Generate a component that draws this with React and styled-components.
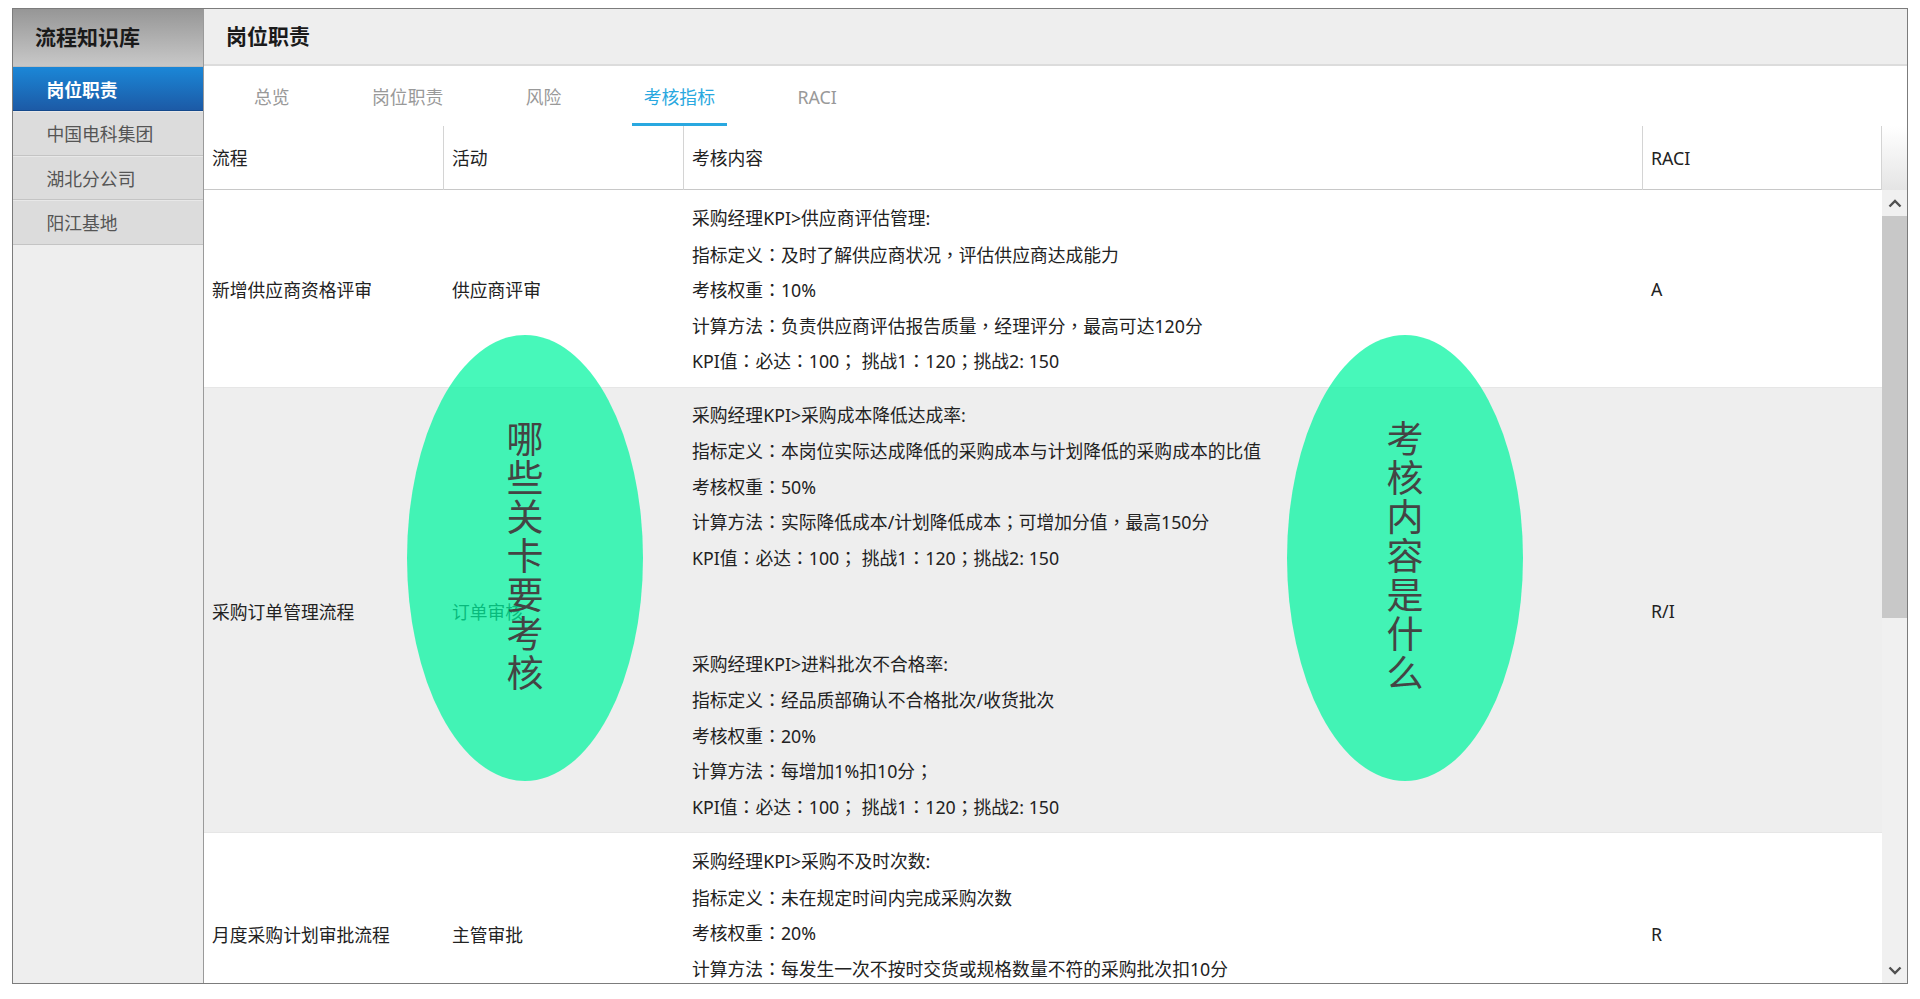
import React from 'react'
import styled, { createGlobalStyle } from 'styled-components'

const kpi = 'KPI值：必达：100； 挑战1：120；挑战2: 150'

const rows = [
  {
    flow: '新增供应商资格评审',
    step: '供应商评审',
    top: 11,
    bottom: 8,
    lines: [
      '采购经理KPI>供应商评估管理:',
      '指标定义：及时了解供应商状况，评估供应商达成能力',
      '考核权重：10%',
      '计算方法：负责供应商评估报告质量，经理评分，最高可达120分',
      kpi,
    ],
    raci: 'A',
  },
  {
    flow: '采购订单管理流程',
    step: '订单审核',
    top: 10,
    bottom: 8,
    active: true,
    lines: [
      '采购经理KPI>采购成本降低达成率:',
      '指标定义：本岗位实际达成降低的采购成本与计划降低的采购成本的比值',
      '考核权重：50%',
      '计算方法：实际降低成本/计划降低成本；可增加分值，最高150分',
      kpi,
      '',
      '',
      '采购经理KPI>进料批次不合格率:',
      '指标定义：经品质部确认不合格批次/收货批次',
      '考核权重：20%',
      '计算方法：每增加1%扣10分；',
      kpi,
    ],
    raci: 'R/I',
  },
  {
    flow: '月度采购计划审批流程',
    step: '主管审批',
    top: 11,
    bottom: 10,
    lines: [
      '采购经理KPI>采购不及时次数:',
      '指标定义：未在规定时间内完成采购次数',
      '考核权重：20%',
      '计算方法：每发生一次不按时交货或规格数量不符的采购批次扣10分',
      kpi,
    ],
    raci: 'R',
  },
]

const Global = createGlobalStyle`
  html, body { margin: 0; padding: 0; background: #fff; }
  body { font-family: "Noto Sans", "Noto Sans CJK SC", sans-serif; color: #222; }
`

// these marks sit centred in the reference, TC has them that way
const withMarks = (text) =>
  text.split(/([：；，])/).map((part, i) => (i % 2 ? <Mark key={i}>{part}</Mark> : part))

export default function App() {
  return (
    <Page>
      <Global />
      <Frame>
        <Sidebar>
          <SideTitle>流程知识库</SideTitle>
          <SideItem $active>岗位职责</SideItem>
          <SideItem>中国电科集团</SideItem>
          <SideItem>湖北分公司</SideItem>
          <SideItem>阳江基地</SideItem>
        </Sidebar>
        <Main>
          <TitleBar>岗位职责</TitleBar>
          <Tabs>
            <Tab>总览</Tab>
            <Tab>岗位职责</Tab>
            <Tab>风险</Tab>
            <Tab $active>考核指标</Tab>
            <Tab>RACI</Tab>
          </Tabs>
          <HeadRow>
            <HeadCell>流程</HeadCell>
            <HeadCell>活动</HeadCell>
            <HeadCell>考核内容</HeadCell>
            <HeadCell>RACI</HeadCell>
            <HeadCorner />
          </HeadRow>
          <Body>
            <Rows>
              {rows.map((row) => (
                <Row key={row.flow} $active={row.active}>
                  <Cell>{row.flow}</Cell>
                  <Cell>{row.step}</Cell>
                  <Lines $top={row.top} $bottom={row.bottom}>
                    {row.lines.map((line, i) => (
                      <Line key={i}>{withMarks(line)}</Line>
                    ))}
                  </Lines>
                  <Cell>{row.raci}</Cell>
                </Row>
              ))}
            </Rows>
            <Scrollbar>
              <ScrollArrow>
                <svg width="14" height="9" viewBox="0 0 14 9">
                  <path d="M1.5 7.5 7 2l5.5 5.5" fill="none" stroke="#505050" strokeWidth="2.4" />
                </svg>
              </ScrollArrow>
              <Thumb />
              <Track />
              <ScrollArrow>
                <svg width="14" height="9" viewBox="0 0 14 9">
                  <path d="M1.5 1.5 7 7l5.5-5.5" fill="none" stroke="#505050" strokeWidth="2.4" />
                </svg>
              </ScrollArrow>
            </Scrollbar>
          </Body>
        </Main>
        <Bubble $left={394}>哪些关卡要考核</Bubble>
        <Bubble $left={1274}>考核内容是什么</Bubble>
      </Frame>
    </Page>
  )
}

const Page = styled.div`
  width: 1920px;
  height: 999px;
  padding: 8px 0 0 12px;
  box-sizing: border-box;
  overflow: hidden;
`

const Frame = styled.div`
  position: relative;
  display: flex;
  width: 1896px;
  height: 976px;
  box-sizing: border-box;
  border: 1px solid #7c7c7c;
  background: #fff;
`

const Sidebar = styled.div`
  width: 190px;
  flex: none;
  background: #eee;
  border-right: 1px solid #9a9a9a;
`

const SideTitle = styled.div`
  height: 58px;
  padding-left: 22px;
  box-sizing: border-box;
  border-bottom: 1px solid #bbb;
  background: linear-gradient(#969696, #c8c8c8);
  font-size: 21px;
  font-weight: 700;
  line-height: 56px;
  color: #1a1a1a;
`

const SideItem = styled.div`
  height: ${(p) => (p.$active ? 44 : 44.5)}px;
  padding-left: 33.5px;
  box-sizing: border-box;
  font-size: 17.8px;
  line-height: 44px;
  font-weight: ${(p) => (p.$active ? 700 : 400)};
  color: ${(p) => (p.$active ? '#fff' : '#555')};
  background: ${(p) => (p.$active ? 'linear-gradient(#1b86d6, #1c5aa6)' : '#dcdcdc')};
  border-top: 1px solid ${(p) => (p.$active ? '#1b86d6' : '#e8e8e8')};
  border-bottom: 1px solid ${(p) => (p.$active ? '#14498c' : '#c4c4c4')};
`

const Main = styled.div`
  flex: 1;
  min-width: 0;
  display: flex;
  flex-direction: column;
`

const TitleBar = styled.div`
  height: 57px;
  flex: none;
  padding-left: 22px;
  box-sizing: border-box;
  background: #eee;
  border-bottom: 2px solid #dcdcdc;
  font-size: 21px;
  font-weight: 700;
  line-height: 55px;
  color: #1a1a1a;
`

const Tabs = styled.div`
  height: 60px;
  flex: none;
  display: flex;
  padding-left: 38px;
`

const Tab = styled.div`
  padding: 0 12px;
  margin-right: 58.5px;
  box-sizing: border-box;
  height: 60px;
  font-size: 17.8px;
  line-height: 62px;
  color: ${(p) => (p.$active ? '#29a8e0' : '#999')};
  border-bottom: 3px solid ${(p) => (p.$active ? '#29a8e0' : 'transparent')};
`

const columns = '240px 240px 959px 239px'

const HeadRow = styled.div`
  height: 64px;
  flex: none;
  display: grid;
  grid-template-columns: ${columns} 1fr;
  border-bottom: 1px solid #c8c8c8;
  box-sizing: border-box;
`

const HeadCell = styled.div`
  padding-left: 8px;
  font-size: 17.8px;
  line-height: 65px;
  border-right: 1px solid #d4d4d4;
`

const HeadCorner = styled.div`
  background: linear-gradient(#fff, #e4e4e4);
`

const Body = styled.div`
  flex: 1;
  min-height: 0;
  display: flex;
`

const Rows = styled.div`
  flex: 1;
  min-width: 0;
  overflow: hidden;
`

const Row = styled.div`
  display: grid;
  grid-template-columns: ${columns};
  background: ${(p) => (p.$active ? '#eee' : '#fff')};
  border-bottom: 1px solid #e6e6e6;
`

const Cell = styled.div`
  display: flex;
  align-items: center;
  padding: 2px 0 0 8px;
  font-size: 17.8px;
`

const Lines = styled.div`
  padding: ${(p) => p.$top}px 8px ${(p) => p.$bottom}px;
`

const Line = styled.div`
  height: 35.55px;
  font-size: 17.8px;
  line-height: 35.55px;
  white-space: pre;
`

const Mark = styled.span`
  font-family: "Noto Sans CJK TC", sans-serif;
`

const Scrollbar = styled.div`
  width: 25px;
  flex: none;
  display: flex;
  flex-direction: column;
  background: #f0f0f0;
`

const ScrollArrow = styled.div`
  height: 26px;
  flex: none;
  display: flex;
  align-items: center;
  justify-content: center;
`

const Thumb = styled.div`
  height: 402px;
  flex: none;
  background: #c8c8c8;
`

const Track = styled.div`
  flex: 1;
`

const Bubble = styled.div`
  position: absolute;
  top: 326px;
  left: ${(p) => p.$left}px;
  width: 236px;
  height: 446px;
  display: flex;
  align-items: center;
  justify-content: center;
  border-radius: 50%;
  background: rgba(0, 245, 160, 0.72);
  color: #444;
  font-size: 37px;
  line-height: 39px;
  text-align: center;
  padding: 0 99px 6px;
  box-sizing: border-box;
`
